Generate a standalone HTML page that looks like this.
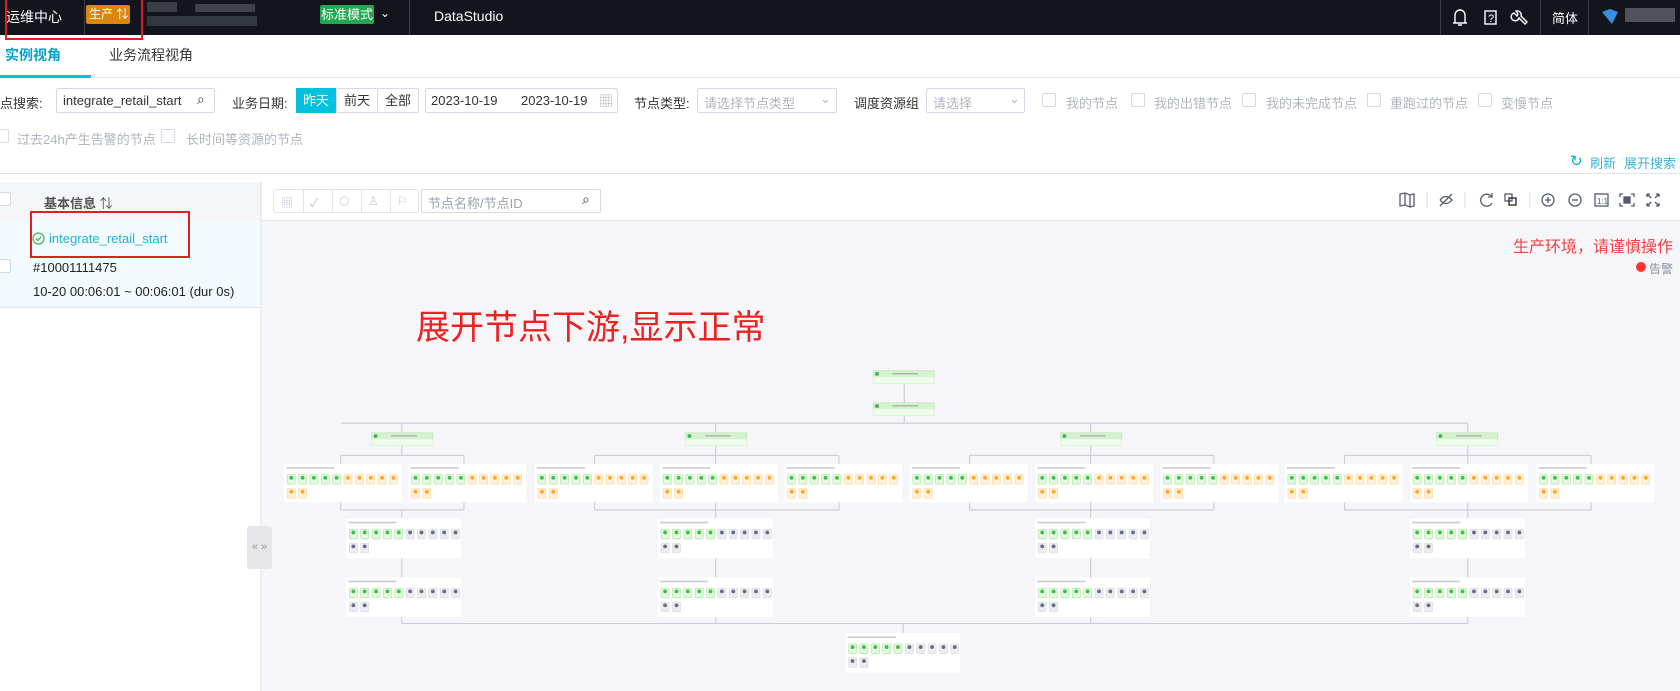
<!DOCTYPE html>
<html><head><meta charset="utf-8"><style>
*{box-sizing:border-box;margin:0;padding:0}
body{width:1680px;height:691px;overflow:hidden;position:relative;background:#fff;font-family:"Liberation Sans","Noto Sans CJK SC",sans-serif;font-size:13px;color:#333}
.a{position:absolute;white-space:nowrap}
.hdr{left:0;top:0;width:1680px;height:35px;background:#12151c}
.w{color:#fff}
.cb{position:absolute;width:14px;height:14px;border:1px solid #d6d9e4;border-radius:2px;background:#fff}
.inp{position:absolute;border:1px solid #d6d9e4;border-radius:2px;background:#fff;height:25px}
.gr{color:#b0b4c0}
.sep{position:absolute;width:1px;background:#3a3d45;top:0;height:35px}
</style></head><body>
<div class="a hdr"></div>
<div class="a w" style="left:6px;top:7px;font-size:14px">运维中心</div>
<div class="a" style="left:84px;top:0;width:1px;height:35px;background:#3a3d45"></div>
<div class="a w" style="left:86px;top:5px;width:44px;height:19px;background:#d9870f;border-radius:2px;font-size:12px;line-height:19px;padding-left:3px">生产 ⇅</div>
<div class="a" style="left:5px;top:0;width:138px;height:40px;border:2px solid #e02020;border-top:none"></div>
<div class="a" style="left:147px;top:2px;width:30px;height:10px;background:#555a62;opacity:.6"></div>
<div class="a" style="left:195px;top:4px;width:60px;height:8px;background:#6b7078;opacity:.5"></div>
<div class="a" style="left:147px;top:16px;width:110px;height:10px;background:#4a4e56;opacity:.6"></div>
<div class="a w" style="left:320px;top:5px;width:54px;height:19px;background:#23a84f;border-radius:2px;font-size:13px;line-height:19px;text-align:center">标准模式</div>
<div class="a w" style="left:380px;top:6px;font-size:12px">⌄</div>
<div class="sep" style="left:409px"></div>
<div class="a w" style="left:434px;top:8px;font-size:14px">DataStudio</div>
<div class="sep" style="left:1440px"></div><div class="sep" style="left:1540px"></div><div class="sep" style="left:1588px"></div>
<svg class="a" style="left:1452px;top:7px" width="100" height="22" viewBox="0 0 100 22" fill="none" stroke="#fff" stroke-width="1.4">
<path d="M3 16 V8 a5 5 0 0 1 10 0 V16 Z M1 16 H15 M6 18 H10"/>
<rect x="33" y="4" width="11" height="13"/><text x="36" y="15" fill="#fff" stroke="none" font-size="11" font-family="Liberation Sans">?</text>
<path d="M62 6 a4 4 0 1 0 5 5 l6 6 l2 -2 l-6 -6 a4 4 0 0 0 -5 -5 l2 3 l-1 2 z"/>
</svg>
<div class="a w" style="left:1552px;top:8px;font-size:13px">简体</div>
<svg class="a" style="left:1602px;top:9px" width="20" height="16"><path d="M0 3 L8 0 L16 3 L10 15 Z" fill="#3a8de0"/></svg>
<div class="a" style="left:1625px;top:8px;width:50px;height:14px;background:#7a7d85;opacity:.6"></div>

<div class="a" style="left:5px;top:45px;font-size:14px;font-weight:bold;color:#00a3cc">实例视角</div>
<div class="a" style="left:109px;top:45px;font-size:14px;color:#333">业务流程视角</div>
<div class="a" style="left:0;top:77px;width:1680px;height:1px;background:#e3e5ea"></div>
<div class="a" style="left:0;top:75px;width:91px;height:3px;background:#00c1de"></div>

<div class="a" style="left:0;top:93px">点搜索:</div>
<div class="inp" style="left:56px;top:88px;width:159px"><span class="a" style="left:6px;top:4px">integrate_retail_start</span><span class="a" style="left:140px;top:2px;font-size:14px">⌕</span></div>
<div class="a" style="left:232px;top:93px">业务日期:</div>
<div class="a" style="left:296px;top:88px;width:40px;height:25px;background:#00c1de;color:#fff;text-align:center;line-height:25px">昨天</div>
<div class="inp" style="left:336px;top:88px;width:42px;text-align:center;line-height:23px">前天</div>
<div class="inp" style="left:377px;top:88px;width:42px;text-align:center;line-height:23px">全部</div>
<div class="inp" style="left:425px;top:88px;width:193px"><span class="a" style="left:5px;top:4px">2023-10-19</span><span class="a" style="left:95px;top:4px">2023-10-19</span><span class="a gr" style="left:173px;top:2px;font-size:14px">▦</span></div>
<div class="a" style="left:634px;top:93px">节点类型:</div>
<div class="inp" style="left:697px;top:88px;width:140px"><span class="a gr" style="left:6px;top:4px">请选择节点类型</span><span class="a gr" style="left:122px;top:2px">⌄</span></div>
<div class="a" style="left:854px;top:93px">调度资源组</div>
<div class="inp" style="left:926px;top:88px;width:99px"><span class="a gr" style="left:6px;top:4px">请选择</span><span class="a gr" style="left:82px;top:2px">⌄</span></div>
<div class="cb" style="left:1042px;top:93px"></div><div class="a gr" style="left:1066px;top:93px">我的节点</div>
<div class="cb" style="left:1131px;top:93px"></div><div class="a gr" style="left:1154px;top:93px">我的出错节点</div>
<div class="cb" style="left:1242px;top:93px"></div><div class="a gr" style="left:1266px;top:93px">我的未完成节点</div>
<div class="cb" style="left:1367px;top:93px"></div><div class="a gr" style="left:1390px;top:93px">重跑过的节点</div>
<div class="cb" style="left:1478px;top:93px"></div><div class="a gr" style="left:1501px;top:93px">变慢节点</div>
<div class="cb" style="left:-5px;top:129px"></div><div class="a gr" style="left:17px;top:129px">过去24h产生告警的节点</div>
<div class="cb" style="left:161px;top:129px"></div><div class="a gr" style="left:186px;top:129px">长时间等资源的节点</div>
<div class="a" style="left:1570px;top:152px;color:#00b0d8;font-size:15px">↻</div>
<div class="a" style="left:1590px;top:153px;color:#3bb3d6">刷新</div>
<div class="a" style="left:1624px;top:153px;color:#3bb3d6">展开搜索</div>
<div class="a" style="left:0;top:173px;width:1680px;height:1px;background:#e0e2e8"></div>

<div class="a" style="left:0;top:182px;width:260px;height:39px;background:#f5f6f9"></div>
<div class="cb" style="left:-3px;top:192px"></div>
<div class="a" style="left:44px;top:193px;font-weight:bold;color:#555">基本信息 <span style="font-weight:normal">⇅</span></div>
<div class="a" style="left:0;top:221px;width:260px;height:87px;background:#f3fafd;border-bottom:1px solid #e3e5ea"></div>
<div class="cb" style="left:-3px;top:259px"></div>
<svg class="a" style="left:32px;top:232px" width="13" height="13"><circle cx="6.5" cy="6.5" r="5.5" fill="none" stroke="#3cb94b" stroke-width="1.2"/><path d="M3.8 6.6 L5.8 8.5 L9.2 4.7" fill="none" stroke="#3cb94b" stroke-width="1.2"/></svg>
<div class="a" style="left:49px;top:231px;color:#1fb2d6">integrate_retail_start</div>
<div class="a" style="left:30px;top:211px;width:160px;height:47px;border:2px solid #e02020"></div>
<div class="a" style="left:33px;top:260px;color:#222">#10001111475</div>
<div class="a" style="left:33px;top:284px;color:#222">10-20 00:06:01 ~ 00:06:01 (dur 0s)</div>
<div class="a" style="left:260px;top:182px;width:2px;height:509px;background:#ececf0"></div>

<div class="a" style="left:262px;top:182px;width:1418px;height:509px;background:#f6f6fa"></div>
<div class="a" style="left:262px;top:182px;width:1418px;height:39px;background:#fff;border-bottom:1px solid #e4e4f0"></div>
<div class="a" style="left:273px;top:189px;width:146px;height:24px;border:1px solid #e2e4ec;border-radius:3px;color:#c5c8d3;font-size:12px">
<span class="a" style="left:7px;top:4px">▦</span><span class="a" style="left:29px;top:0;width:1px;height:22px;background:#e2e4ec"></span><span class="a" style="left:36px;top:4px">✓</span><span class="a" style="left:58px;top:0;width:1px;height:22px;background:#e2e4ec"></span><span class="a" style="left:65px;top:4px">⬡</span><span class="a" style="left:87px;top:0;width:1px;height:22px;background:#e2e4ec"></span><span class="a" style="left:94px;top:4px">♙</span><span class="a" style="left:116px;top:0;width:1px;height:22px;background:#e2e4ec"></span><span class="a" style="left:123px;top:4px">⚐</span></div>
<div class="inp" style="left:421px;top:189px;width:180px;height:24px"><span class="a gr" style="left:6px;top:3px;color:#9aa0ad">节点名称/节点ID</span><span class="a" style="left:160px;top:1px;font-size:14px">⌕</span></div>
<svg class="a" style="left:1395px;top:190px" width="280" height="20" fill="none" stroke="#555b6e" stroke-width="1.3">
<path d="M5 4 L10 3 L15 5 L19 4 V16 L15 17 L10 15 L5 16 Z M10 3 V15 M15 5 V17"/>
<line x1="32" y1="2" x2="32" y2="18" stroke="#e2e4ec"/>
<path d="M45 10 q6 -7 12 0 q-6 7 -12 0 M45 16 L57 4"/>
<line x1="70" y1="2" x2="70" y2="18" stroke="#e2e4ec"/>
<path d="M96 6 A6 6 0 1 0 97 13 M97 3 V7 H93"/>
<rect x="110" y="4" width="7" height="7"/><rect x="114" y="8" width="7" height="7" stroke="#222"/>
<line x1="135" y1="2" x2="135" y2="18" stroke="#e2e4ec"/>
<circle cx="153" cy="10" r="6"/><path d="M150 10 H156 M153 7 V13"/>
<circle cx="180" cy="10" r="6"/><path d="M177 10 H183"/>
<rect x="200" y="4" width="13" height="12"/><text x="202" y="14" fill="#555b6e" stroke="none" font-size="8" font-family="Liberation Sans">1:1</text>
<path d="M228 4 H225 V7 M236 4 H239 V7 M228 16 H225 V13 M236 16 H239 V13"/><rect x="229" y="7" width="6" height="6" fill="#555b6e"/>
<path d="M252 4 L256 8 M264 4 L260 8 M252 16 L256 12 M264 16 L260 12 M252 4 H255 M252 4 V7 M264 4 H261 M264 4 V7 M252 16 H255 M252 16 V13 M264 16 H261 M264 16 V13"/>
</svg>
<div class="a" style="left:1513px;top:233px;color:#f04040;font-size:16px">生产环境，请谨慎操作</div>
<div class="a" style="left:1636px;top:262px;width:10px;height:10px;border-radius:50%;background:#f33"></div>
<div class="a" style="left:1649px;top:260px;color:#8a8fa0;font-size:12px">告警</div>
<div class="a" style="left:416px;top:300px;color:#ee2020;font-size:34px">展开节点下游,显示正常</div>
<div class="a" style="left:247px;top:526px;width:25px;height:43px;background:#e6e6ea;border-radius:3px;color:#999;font-size:11px;line-height:43px;text-align:center">« »</div>

<svg class="a" style="left:0;top:0" width="1680" height="691" viewBox="0 0 1568 645">
<defs>
<g id="g1"><rect width="7.5" height="9" rx="1" fill="#e3f8de" stroke="#a9e6a0" stroke-width=".6"/><circle cx="3.75" cy="3" r="1.8" fill="#3cc04b"/></g>
<g id="o1"><rect width="7.5" height="9" rx="1" fill="#fff0da" stroke="#ffd59a" stroke-width=".6"/><circle cx="3.75" cy="3" r="1.8" fill="#ffa726"/></g>
<g id="k1"><rect width="7.5" height="9" rx="1" fill="#ececf2" stroke="#d8d9e2" stroke-width=".6"/><circle cx="3.75" cy="3" r="1.8" fill="#6a6e82"/></g>
<g id="rowG"><use href="#g1" x="3" y="10"/><use href="#g1" x="13.6" y="10"/><use href="#g1" x="24.2" y="10"/><use href="#g1" x="34.8" y="10"/><use href="#g1" x="45.4" y="10"/></g>
<g id="rowO"><use href="#o1" x="56" y="10"/><use href="#o1" x="66.6" y="10"/><use href="#o1" x="77.2" y="10"/><use href="#o1" x="87.8" y="10"/><use href="#o1" x="98.4" y="10"/><use href="#o1" x="3" y="23"/><use href="#o1" x="13.6" y="23"/></g>
<g id="rowK"><use href="#k1" x="56" y="10"/><use href="#k1" x="66.6" y="10"/><use href="#k1" x="77.2" y="10"/><use href="#k1" x="87.8" y="10"/><use href="#k1" x="98.4" y="10"/><use href="#k1" x="3" y="23"/><use href="#k1" x="13.6" y="23"/></g>
<g id="cO"><rect width="110" height="36" fill="#fff"/><rect x="2" y="3" width="45" height="1.5" fill="#ccc"/><use href="#rowG"/><use href="#rowO"/></g>
<g id="cK"><rect width="107" height="37" fill="#fff"/><rect x="2" y="3" width="45" height="1.5" fill="#ccc"/><use href="#rowG"/><use href="#rowK"/></g>
<g id="gn"><rect width="57" height="12" fill="#d5f2cf" stroke="#b6e6ad" stroke-width=".6"/><rect y="6" width="57" height="6" fill="#effbec"/><circle cx="3.5" cy="3" r="1.8" fill="#3cb94b"/><rect x="18" y="2.2" width="24" height="1.2" fill="#aaa"/></g>
</defs>
<g fill="none" stroke="#c8cad8" stroke-width="1">
<path d="M844 357 V376 M844 387 V395 M318 395 H1370 M375 395 V404 M668 395 V404 M1018 395 V404 M1370 395 V404"/>
<path d="M375 416 V425 M318 425 H433 M318 425 V433 M433 425 V433"/>
<path d="M668 416 V425 M555 425 H783 M555 425 V433 M668 425 V433 M783 425 V433"/>
<path d="M1018 416 V425 M905 425 H1133 M905 425 V433 M1018 425 V433 M1133 425 V433"/>
<path d="M1370 416 V425 M1255 425 H1485 M1255 425 V433 M1370 425 V433 M1485 425 V433"/>
<path d="M318 469 V476 H433 V469 M375 476 V483"/>
<path d="M555 469 V476 H783 V469 M668 469 V483"/>
<path d="M905 469 V476 H1133 V469 M1018 469 V483"/>
<path d="M1255 469 V476 H1485 V469 M1370 469 V483"/>
<path d="M375 521 V539 M668 521 V539 M1018 521 V539 M1370 521 V539"/>
<path d="M375 575 V582 H1370 V575 M668 575 V582 M1018 575 V582 M843 582 V591"/>
</g>
<use href="#gn" x="815" y="346"/><use href="#gn" x="815" y="376"/>
<use href="#gn" x="347" y="404"/><use href="#gn" x="640" y="404"/><use href="#gn" x="990" y="404"/><use href="#gn" x="1341" y="404"/>
<use href="#cO" x="265" y="433"/><use href="#cO" x="381" y="433"/>
<use href="#cO" x="499" y="433"/><use href="#cO" x="616" y="433"/><use href="#cO" x="732" y="433"/>
<use href="#cO" x="849" y="433"/><use href="#cO" x="966" y="433"/><use href="#cO" x="1083" y="433"/>
<use href="#cO" x="1199" y="433"/><use href="#cO" x="1316" y="433"/><use href="#cO" x="1434" y="433"/>
<use href="#cK" x="323" y="484"/><use href="#cK" x="614" y="484"/><use href="#cK" x="966" y="484"/><use href="#cK" x="1316" y="484"/>
<use href="#cK" x="323" y="539"/><use href="#cK" x="614" y="539"/><use href="#cK" x="966" y="539"/><use href="#cK" x="1316" y="539"/>
<use href="#cK" x="789" y="591"/>
</svg>
</body></html>
